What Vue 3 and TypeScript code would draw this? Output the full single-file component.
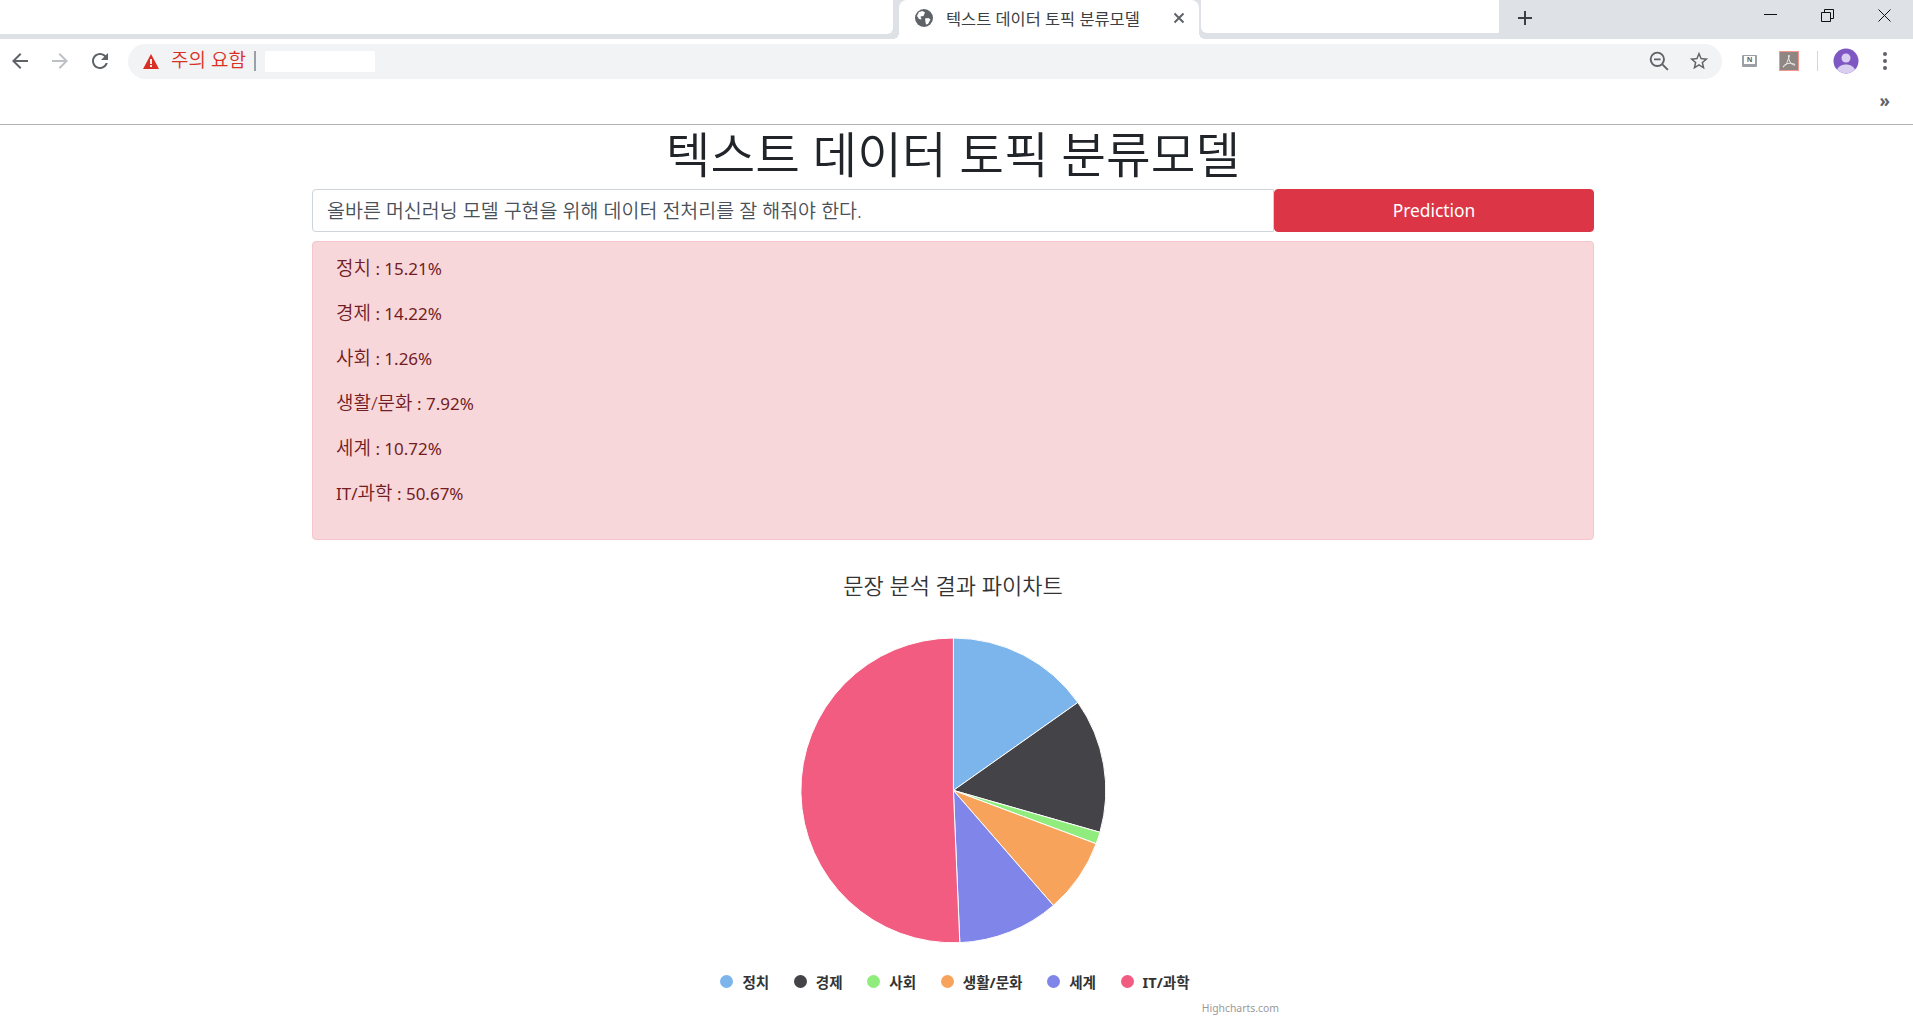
<script setup lang="ts">
interface Topic {
  name: string
  value: number
  color: string
}

const topics: Topic[] = [
  { name: '정치', value: 15.21, color: '#7cb5ec' },
  { name: '경제', value: 14.22, color: '#434348' },
  { name: '사회', value: 1.26, color: '#90ed7d' },
  { name: '생활/문화', value: 7.92, color: '#f7a35c' },
  { name: '세계', value: 10.72, color: '#8085e9' },
  { name: 'IT/과학', value: 50.67, color: '#f15c80' },
]

const sentence = '올바른 머신러닝 모델 구현을 위해 데이터 전처리를 잘 해줘야 한다.'
const pageTitle = '텍스트 데이터 토픽 분류모델'

// 라벨 앞쪽 영문 (IT/) 은 한글보다 작게 보인다
function latinPrefix(name: string) {
  const m = name.match(/^[A-Z/]+/)
  return m ? m[0] : ''
}

function hangulPart(name: string) {
  return name.slice(latinPrefix(name).length)
}

// 파이 조각 path 계산
const total = topics.reduce((sum, t) => sum + t.value, 0)
const center = 155.4
const radius = 152.4

function point(angle: number) {
  const x = center + radius * Math.sin(angle)
  const y = center - radius * Math.cos(angle)
  return `${x.toFixed(2)} ${y.toFixed(2)}`
}

let start = 0
const slices = topics.map((t) => {
  const end = start + (t.value / total) * Math.PI * 2
  const large = end - start > Math.PI ? 1 : 0
  const d = `M${center} ${center}L${point(start)}A${radius} ${radius} 0 ${large} 1 ${point(end)}Z`
  start = end
  return { name: t.name, color: t.color, d }
})
</script>

<template>
  <div class="page">
    <!-- 브라우저 상단 -->
    <header class="browser">
      <div class="tabstrip">
        <div class="blank blank-left"></div>
        <div class="tab">
          <svg class="globe" width="18" height="18" viewBox="0 0 18 18">
            <circle cx="9" cy="9" r="9" fill="#5f6368" />
            <path d="M4 3 7.500 2 10 3.500 8.500 7 5.500 7.500 6.500 10.500 4 10 2 7ZM10 9.500 13.500 9 15.500 10.500 13 15 11 15.500 10.500 13Z" fill="#fff" />
          </svg>
          <span class="tab-title">{{ pageTitle }}</span>
          <svg class="tab-close" width="12" height="12" viewBox="0 0 12 12">
            <path d="M1.500 1.500 10.500 10.500M10.500 1.500 1.500 10.500" stroke="#5f6368" stroke-width="2" />
          </svg>
        </div>
        <div class="blank blank-right"></div>
        <svg class="new-tab" width="14" height="14" viewBox="0 0 14 14">
          <path d="M7 0V14M0 7H14" stroke="#3c4043" stroke-width="2" />
        </svg>
        <div class="window-controls">
          <svg width="13" height="13" viewBox="0 0 13 13"><path d="M0 5.500H13" stroke="#111" fill="none" /></svg>
          <svg width="13" height="13" viewBox="0 0 13 13">
            <path d="M.5 3.500H9.500V12.500H.5ZM3.500 3.500V.5H12.500V9.500H9.500" stroke="#111" fill="none" />
          </svg>
          <svg width="13" height="13" viewBox="0 0 13 13"><path d="M.5.5 12.500 12.500M12.500.5.5 12.500" stroke="#111" fill="none" /></svg>
        </div>
      </div>

      <div class="toolbar">
        <svg class="nav-icon" width="24" height="24" viewBox="0 0 24 24" fill="#5f6368">
          <path d="M20 11H7.830l5.590-5.590L12 4l-8 8 8 8 1.410-1.410L7.830 13H20v-2z" />
        </svg>
        <svg class="nav-icon" width="24" height="24" viewBox="0 0 24 24" fill="#bdc1c6">
          <path d="M12 4l-1.410 1.410L16.170 11H4v2h12.170l-5.580 5.590L12 20l8-8z" />
        </svg>
        <svg class="nav-icon" width="24" height="24" viewBox="0 0 24 24" fill="#5f6368">
          <path d="M17.650 6.350C16.200 4.900 14.210 4 12 4c-4.420 0-7.990 3.580-7.990 8s3.570 8 7.990 8c3.730 0 6.840-2.550 7.730-6h-2.080c-.82 2.330-3.040 4-5.650 4-3.310 0-6-2.690-6-6s2.690-6 6-6c1.660 0 3.140.69 4.220 1.780L13 11h7V4l-2.350 2.350z" />
        </svg>
        <div class="omnibox">
          <svg width="16" height="15" viewBox="0 0 16 15">
            <path d="M8 0 16 15H0Z" fill="#d93025" />
            <path d="M7.100 5H8.900V10H7.100ZM7.100 11H8.900V13H7.100Z" fill="#fff" />
          </svg>
          <span class="warning">주의 요함</span>
          <span class="divider"></span>
          <span class="masked-url"></span>
          <svg class="zoom-icon" width="20" height="20" viewBox="0 0 18 18" fill="none" stroke="#5f6368" stroke-width="1.700">
            <circle cx="7.500" cy="7.500" r="6" />
            <path d="M4.500 7.500H10.500M12 12 17 17" />
          </svg>
          <svg class="star-icon" width="22" height="22" viewBox="0 0 24 24" fill="#5f6368">
            <path d="M22 9.240l-7.190-.62L12 2 9.190 8.630 2 9.240l5.460 4.730L5.820 21 12 17.270 18.180 21l-1.630-7.030L22 9.240zM12 15.400l-3.760 2.270 1-4.280-3.320-2.880 4.380-.38L12 6.100l1.710 4.040 4.380.38-3.320 2.880 1 4.280L12 15.400z" />
          </svg>
        </div>
        <div class="extensions">
          <div class="ext-note"><span>N</span></div>
          <div class="ext-pdf">
            <svg width="14" height="14" viewBox="0 0 14 14" fill="none" stroke="#eee" stroke-width="1">
              <path d="M7 1C6 2 6.500 5 8 8 9 10 11.500 11.500 13 11 13 9.500 9 9 6 9.500 3.500 10 1 12 1 13 2.500 13 5 9 6 6 6.500 4 8 2 7 1Z" />
            </svg>
          </div>
          <span class="ext-sep"></span>
          <svg class="avatar" width="26" height="26" viewBox="0 0 26 26">
            <circle cx="13" cy="13" r="12.500" fill="#7e57c2" />
            <circle cx="13" cy="10" r="4.500" fill="#d9cdf0" />
            <path d="M4 21.500C6 17.500 10 16.500 13 16.500S20 17.500 22 21.500C19.500 24 16 25.500 13 25.500S6.500 24 4 21.500Z" fill="#d9cdf0" />
          </svg>
          <svg class="menu-dots" width="4" height="18" viewBox="0 0 4 18" fill="#5f6368">
            <circle cx="2" cy="2" r="2" /><circle cx="2" cy="9" r="2" /><circle cx="2" cy="16" r="2" />
          </svg>
        </div>
      </div>

      <div class="bookmarks">
        <span class="more">»</span>
      </div>
    </header>

    <!-- 본문 -->
    <main class="container">
      <h1 class="title">{{ pageTitle }}</h1>
      <form class="predict-form" @submit.prevent>
        <input class="sentence-input" type="text" :value="sentence" />
        <button class="predict-btn" type="submit">Prediction</button>
      </form>

      <div class="result-alert">
        <p v-for="t in topics" :key="t.name" class="result-row">
          {{ latinPrefix(t.name) }}<span class="kr">{{ hangulPart(t.name) }}</span> : {{ t.value }}%
        </p>
      </div>

      <section class="chart">
        <div class="chart-title">문장 분석 결과 파이차트</div>
        <svg class="pie" width="311" height="311" viewBox="0 0 311 311">
          <path
            v-for="s in slices"
            :key="s.name"
            :d="s.d"
            :fill="s.color"
            stroke="#fff"
            stroke-width="1"
            stroke-linejoin="round"
          />
        </svg>
        <ul class="legend">
          <li v-for="t in topics" :key="t.name" class="legend-item">
            <span class="legend-dot" :style="{ backgroundColor: t.color }"></span>
            {{ t.name }}
          </li>
        </ul>
        <div class="credits">Highcharts.com</div>
      </section>
    </main>
  </div>
</template>

<style scoped>
.page {
  font-family: "Noto Sans", "Noto Sans CJK KR", sans-serif;
  color: #212529;
}

/* 브라우저 상단 */
.browser {
  height: 125px;
  box-sizing: border-box;
  border-bottom: 1px solid #b4b4b4;
  background: #fff;
}

.tabstrip {
  display: flex;
  height: 39px;
  background: #dee1e6;
}

.blank {
  background: #fff;
}

.blank-left {
  width: 893px;
  height: 34px;
  margin-right: 6px;
  border-bottom-right-radius: 6px;
}

.blank-right {
  width: 298px;
  height: 33px;
  border-bottom-left-radius: 6px;
}

.tab {
  position: relative;
  width: 300px;
  height: 39px;
  margin-right: 2px;
  display: flex;
  align-items: center;
  padding: 0 14px 3px 16px;
  box-sizing: border-box;
  background: #fff;
  border-radius: 8px 8px 0 0;
}

/* 탭 아래쪽 곡선 */
.tab::before,
.tab::after {
  content: "";
  position: absolute;
  bottom: 0;
  width: 6px;
  height: 6px;
}

.tab::before {
  left: -6px;
  background: radial-gradient(circle at 0 0, transparent 6px, #fff 6px);
}

.tab::after {
  right: -6px;
  background: radial-gradient(circle at 100% 0, transparent 6px, #fff 6px);
}

.tab-title {
  margin-left: 13px;
  font-size: 16.400px;
  color: #3c4043;
  white-space: nowrap;
}

.tab-close {
  margin-left: auto;
}

.new-tab {
  margin: 11px 0 0 19px;
}

.window-controls {
  margin-left: auto;
  display: flex;
  gap: 44px;
  padding: 9px 22px 0 0;
  height: 13px;
}

.toolbar {
  display: flex;
  align-items: center;
  height: 44px;
  box-sizing: border-box;
}

.nav-icon {
  margin: 0 8px;
  flex: none;
}

.omnibox {
  width: 1594px;
  height: 35px;
  margin-left: 8px;
  box-sizing: border-box;
  display: flex;
  align-items: center;
  padding-left: 15px;
  border-radius: 18px;
  background: #f1f3f4;
}

.warning {
  margin-left: 12px;
  font-size: 19px;
  font-weight: 350;
  line-height: 30px;
  padding-bottom: 2px;
  color: #d93025;
  white-space: nowrap;
}

.divider {
  width: 2px;
  height: 20px;
  margin-left: 8px;
  background: #9aa0a6;
}

.masked-url {
  width: 110px;
  height: 21px;
  margin-left: 9px;
  background: #fff;
}

.zoom-icon {
  margin-left: auto;
}

.star-icon {
  margin: 0 12px 0 19px;
}

.extensions {
  display: flex;
  align-items: center;
  margin-left: 20px;
}

.ext-note {
  width: 15px;
  height: 12px;
  border-radius: 1px;
  background: #9aa0a6;
  display: flex;
  justify-content: center;
}

.ext-note span {
  width: 11px;
  height: 8px;
  margin-top: 1px;
  background: #fff;
  color: #5f6368;
  font-size: 7px;
  font-weight: 700;
  line-height: 8px;
  text-align: center;
}

.ext-pdf {
  width: 20px;
  height: 20px;
  margin-left: 22px;
  box-sizing: border-box;
  border: 1px solid #f4978e;
  background: #8f8583;
  display: flex;
  align-items: center;
  justify-content: center;
}

.ext-sep {
  width: 1px;
  height: 20px;
  margin-left: 18px;
  background: #d3d5d8;
}

.avatar {
  margin-left: 15px;
}

.menu-dots {
  margin-left: 24px;
}

.bookmarks {
  height: 41px;
  display: flex;
  justify-content: flex-end;
  align-items: center;
  padding: 0 23px 6px 0;
  box-sizing: border-box;
}

.more {
  font-size: 17px;
  color: #5f6368;
  font-weight: 700;
  line-height: 1;
}

/* 본문 */
.container {
  width: 1282px;
  margin-left: 312px;
}

.title {
  margin: 0 0 8px;
  padding-top: 2px;
  font-size: 48.600px;
  font-weight: 350;
  line-height: 54px;
  text-align: center;
}

.predict-form {
  display: flex;
  height: 43px;
}

.sentence-input {
  flex: 1;
  min-width: 0;
  box-sizing: border-box;
  padding: 0 14px 2px;
  border: 1px solid #ced4da;
  border-radius: 4px 0 0 4px;
  font-family: inherit;
  font-size: 19.500px;
  font-weight: 350;
  color: #495057;
  background: #fff;
  outline: none;
}

.predict-btn {
  width: 320px;
  flex: none;
  padding: 0 0 2px;
  border: 1px solid #dc3545;
  border-radius: 4px;
  background: #dc3545;
  color: #fff;
  font-family: inherit;
  font-size: 17.400px;
  cursor: pointer;
}

.result-alert {
  margin-top: 9px;
  padding: 12px 23px 15px;
  border: 1px solid #f5c6cb;
  border-radius: 4px;
  background: #f8d7da;
  color: #721c24;
}

.result-row {
  margin: 0 0 16px;
  height: 29px;
  line-height: 29px;
  font-size: 17px;
  font-weight: 400;
}

.kr {
  font-size: 19px;
  font-weight: 350;
}

.chart {
  width: 652px;
  margin: 30px auto 0;
  display: flex;
  flex-direction: column;
  align-items: center;
}

.chart-title {
  height: 30px;
  line-height: 30px;
  font-size: 22px;
  font-weight: 350;
  color: #333;
}

.pie {
  margin-top: 35px;
  display: block;
}

.legend {
  list-style: none;
  display: flex;
  gap: 24.600px;
  margin: 25px 0 0 4px;
  padding: 0;
}

.legend-item {
  display: flex;
  align-items: center;
  gap: 9px;
  height: 20px;
  font-size: 14.600px;
  font-weight: 700;
  color: #333;
}

.legend-dot {
  width: 13px;
  height: 13px;
  border-radius: 50%;
}

.credits {
  align-self: flex-end;
  margin-top: 10px;
  font-size: 10.400px;
  line-height: 14px;
  color: #999;
}
</style>

<style>
html,
body {
  margin: 0;
  background: #fff;
  overflow: hidden;
}
</style>
